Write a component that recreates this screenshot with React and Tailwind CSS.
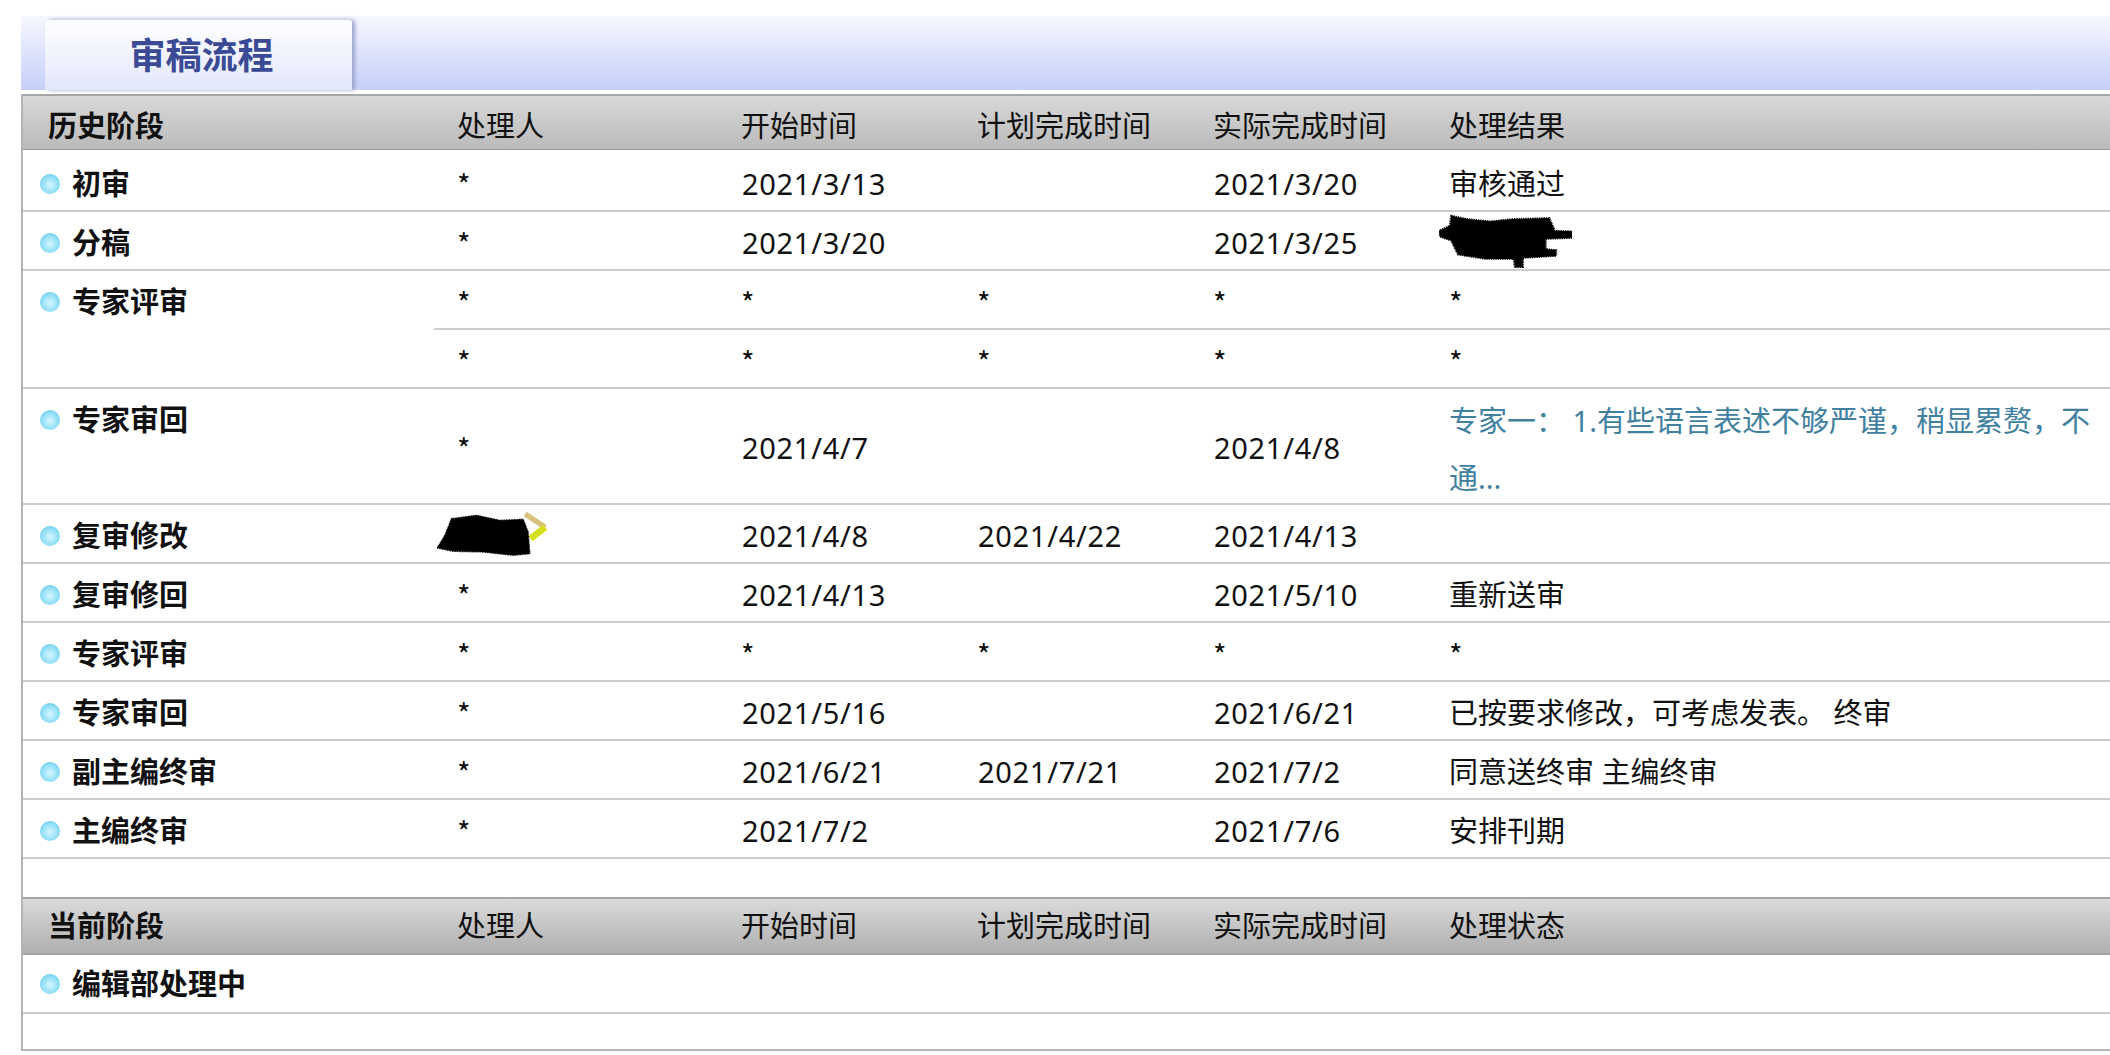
import React from 'react';

const history = [
    { name: '初审', cells: ['*', '2021/3/13', '', '2021/3/20', '审核通过'] },
    { name: '分稿', cells: ['*', '2021/3/20', '', '2021/3/25', 'blob'] },
    { name: '专家评审', span: 2, cells: ['*', '*', '*', '*', '*'] },
    { sub: true, cells: ['*', '*', '*', '*', '*'] },
    { name: '专家审回', tall: true, cells: ['*', '2021/4/7', '', '2021/4/8', 'link'] },
    { name: '复审修改', cells: ['mark', '2021/4/8', '2021/4/22', '2021/4/13', ''] },
    { name: '复审修回', cells: ['*', '2021/4/13', '', '2021/5/10', '重新送审'] },
    { name: '专家评审', cells: ['*', '*', '*', '*', '*'] },
    { name: '专家审回', cells: ['*', '2021/5/16', '', '2021/6/21', '已按要求修改，可考虑发表。 终审'] },
    { name: '副主编终审', cells: ['*', '2021/6/21', '2021/7/21', '2021/7/2', '同意送终审 主编终审'] },
    { name: '主编终审', cells: ['*', '2021/7/2', '', '2021/7/6', '安排刊期'] },
];

const Dot = () => (
    <span className="inline-block w-[20px] h-[20px] shrink-0 rounded-full bg-[radial-gradient(circle_at_50%_55%,#d8f6fe_0%,#96e2f8_50%,#4fbce4_100%)]"></span>
);

// scribbled-out areas of the original screenshot
const BlobResult = () => (
    <svg width="133" height="54" viewBox="88 50 292 162" preserveAspectRatio="none" className="block ml-[-10px] mt-[-4px]">
        <polygon
            points="115,55 150,65 200,72 250,65 330,62 342,100 380,102 380,122 322,125 322,155 345,158 345,176 272,182 272,210 255,210 252,185 190,185 130,172 115,130 90,118 88,100 112,85"
            fill="#000"
            stroke="#000"
            strokeWidth="5"
            strokeDasharray="3 2"
        />
    </svg>
);

const BlobMark = () => (
    <svg width="112" height="45" viewBox="112 70 335 135" className="block ml-[-20px] mt-[-3px]">
        <polyline points="376,76 436,116" fill="none" stroke="#d8c27c" strokeWidth="16" />
        <polyline points="436,116 392,150" fill="none" stroke="#d4e01c" strokeWidth="20" />
        <polygon
            points="155,90 230,80 300,95 370,92 385,130 390,195 340,200 250,190 160,188 112,178 135,140"
            fill="#000"
            stroke="#000"
            strokeWidth="4"
            strokeDasharray="3 2"
        />
    </svg>
);

const Cell = ({ value }) => {
    if (value === 'blob') return <BlobResult />;
    if (value === 'mark') return <BlobMark />;
    if (value === 'link') {
        return <span className="block relative top-[3px] text-[#41809f] leading-[57px] mt-[-4px]">专家一： 1.有些语言表述不够严谨，稍显累赘，不通...</span>;
    }
    if (value === '*') return <span className="font-['Noto_Sans_CJK_SC',sans-serif]">*</span>;
    if (/^\d/.test(value)) return <span className="ml-px tracking-[0.7px]">{value}</span>;
    return value;
};

const HeaderRow = ({ title, last, first }) => {
    const labels = ['处理人', '开始时间', '计划完成时间', '实际完成时间', last];
    // the upper header ends in a thin dark line and a white one, the lower in a plain dark line
    const edge = first
        ? 'pt-[5px] border-t-2 border-t-[#a6a6a6] border-b-[3px] border-b-white shadow-[inset_0_-1px_#9a9a9a]'
        : 'border-t-2 border-b-2 border-[#a6a6a6]';
    return (
        <tr className={first ? 'h-[59px] bg-gradient-to-b from-[#dadada] to-[#b8b8b8]' : 'h-[58px] bg-gradient-to-b from-[#dcdcdc] to-[#aeaeae]'}>
            <th className={`pl-[25px] text-left font-bold ${edge}`}>{title}</th>
            {labels.map((label, i) => (
                <td key={i} className={`pl-[23px] ${edge}`}>{label}</td>
            ))}
        </tr>
    );
};

const NameCell = ({ name, rowSpan, top }) => (
    <td rowSpan={rowSpan} className={`pl-[17px] border-b-2 border-[#cccccc] ${top ? 'align-top' : 'align-middle'}`}>
        <div className="flex items-center gap-[12px] h-[57px] pt-[4px] font-bold">
            <Dot />
            {name}
        </div>
    </td>
);

const App = () => {
    return (
        <div className="w-[2110px] h-[1055px] overflow-hidden bg-white pt-[16px] pl-[21px] text-[29px] leading-[40px] text-[#111111] font-['Noto_Sans','Noto_Sans_CJK_SC',sans-serif]">
            <div className="h-[74px] pl-[24px] pt-[4px] bg-gradient-to-b from-[#f6f7fe] to-[#c6d0fa]">
                <div className="w-[307px] h-[70px] rounded-t-[3px] flex items-center justify-center pl-[6px] pt-[2px] text-[36px] font-bold text-[#3a4a94] bg-gradient-to-b from-white to-[#e2e7fb] shadow-[3px_0_4px_#9aa4cc]">
                    审稿流程
                </div>
            </div>
            <table className="mt-[4px] w-[2089px] table-fixed border-separate border-spacing-0 border-l-2 border-[#b4b4b4]">
                <colgroup>
                    <col className="w-[411px]" />
                    <col className="w-[284px]" />
                    <col className="w-[236px]" />
                    <col className="w-[236px]" />
                    <col className="w-[236px]" />
                    <col />
                </colgroup>
                <tbody>
                    <HeaderRow first title="历史阶段" last="处理结果" />
                    {history.map((row, i) => (
                        <tr key={i} className={row.tall ? 'h-[116px]' : 'h-[59px]'}>
                            {!row.sub && <NameCell name={row.name} rowSpan={row.span} top={row.tall || row.span} />}
                            {row.cells.map((value, j) => (
                                <td key={j} className="pl-[23px] pt-[4px] align-middle border-b-2 border-[#cccccc] overflow-visible">
                                    <Cell value={value} />
                                </td>
                            ))}
                        </tr>
                    ))}
                    <tr className="h-[38px]"><td colSpan={6}></td></tr>
                    <HeaderRow title="当前阶段" last="处理状态" />
                    <tr className="h-[59px]">
                        <td colSpan={6} className="pl-[17px] border-b-2 border-[#cccccc]">
                            <div className="flex items-center gap-[12px] font-bold">
                                <Dot />
                                编辑部处理中
                            </div>
                        </td>
                    </tr>
                    <tr className="h-[37px]">
                        <td colSpan={6} className="border-b-2 border-[#b4b4b4]"></td>
                    </tr>
                </tbody>
            </table>
        </div>
    );
};

export default App;
